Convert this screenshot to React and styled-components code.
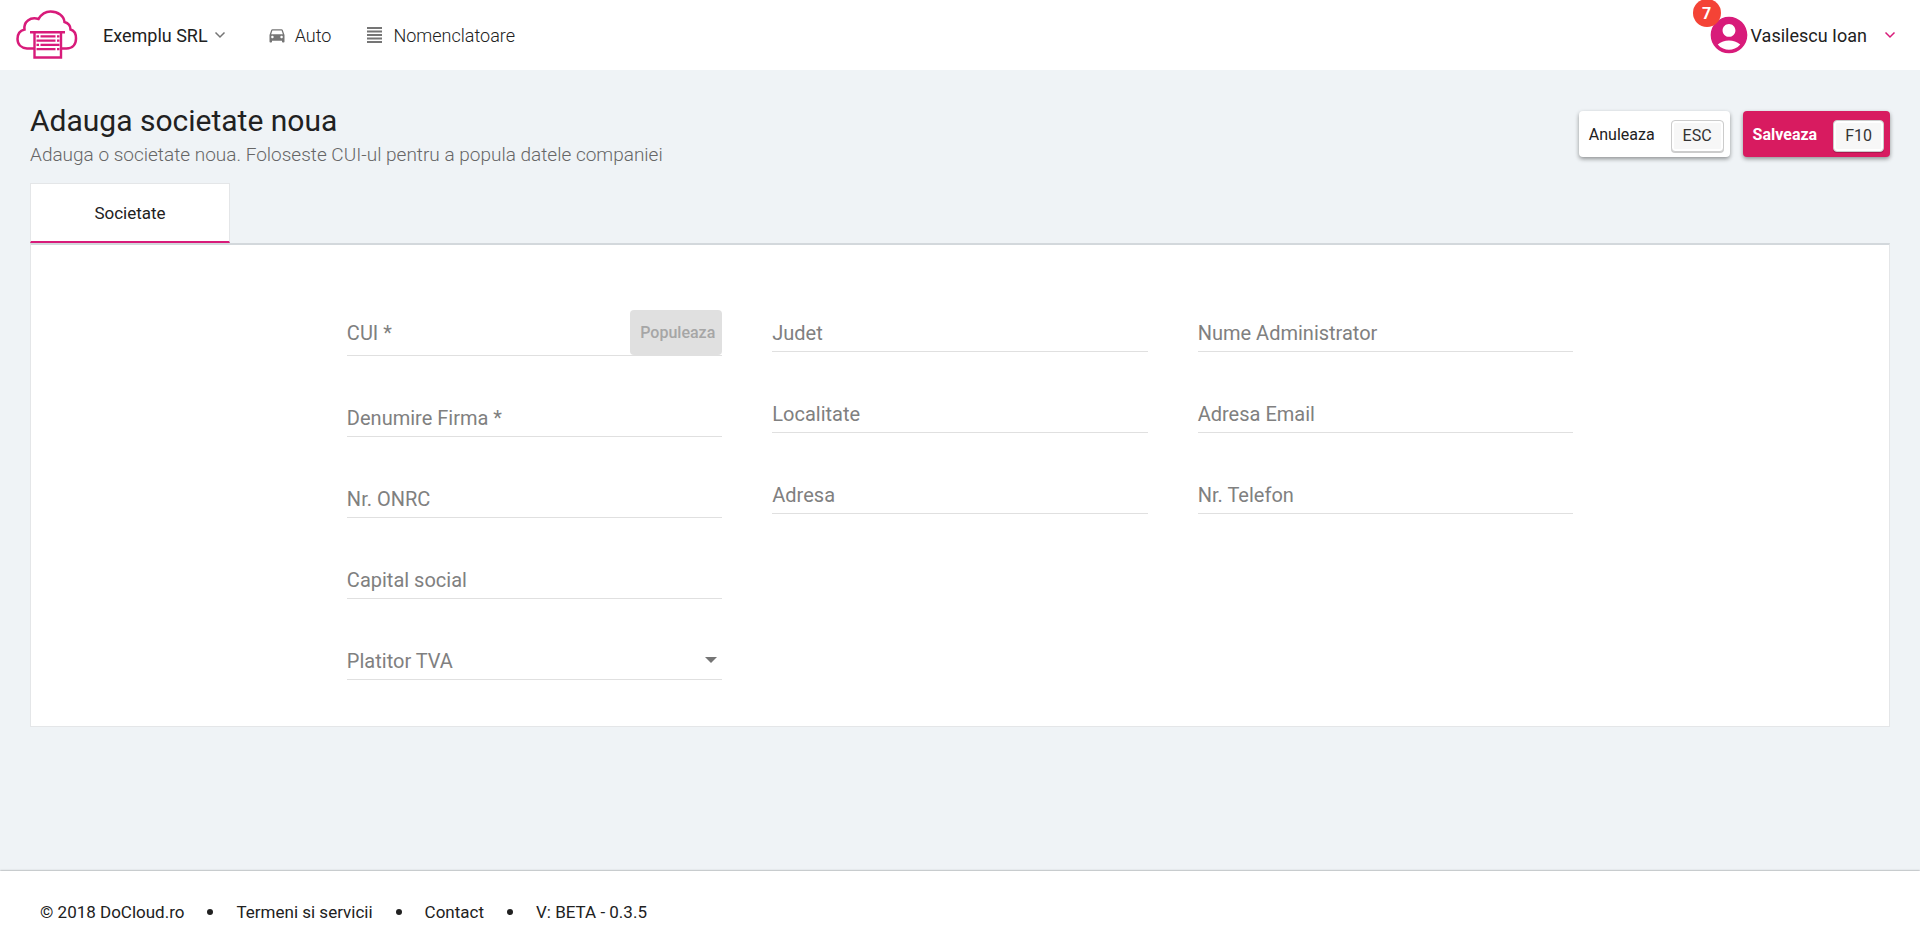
import { useState } from 'react';
import styled, { createGlobalStyle } from 'styled-components';
import { MdAccountCircle, MdDirectionsCar } from 'react-icons/md';

const columns = [
  [
    { id: 'cui', label: 'CUI *', action: 'Populeaza' },
    { id: 'denumire', label: 'Denumire Firma *' },
    { id: 'onrc', label: 'Nr. ONRC' },
    { id: 'capital', label: 'Capital social' },
    { id: 'tva', label: 'Platitor TVA', options: ['Da', 'Nu'] },
  ],
  [
    { id: 'judet', label: 'Judet' },
    { id: 'localitate', label: 'Localitate' },
    { id: 'adresa', label: 'Adresa' },
  ],
  [
    { id: 'administrator', label: 'Nume Administrator' },
    { id: 'email', label: 'Adresa Email' },
    { id: 'telefon', label: 'Nr. Telefon' },
  ],
];

const Logo = () => (
  <svg width="62" height="50" viewBox="0 0 62 50" fill="none" stroke="#d81b7a">
    <path
      d="M18 38.500H11C5.500 38 1.500 34.500 1.500 29C1.500 24 4.500 20.500 8.500 19.500C7.500 12 14 6.500 22.500 9C25.500 4 30 1.500 34.500 1.500C42 1.500 48 6 48.500 12C52 13 54.500 16 54.500 19.500C58.500 20.500 60 24.500 60 28.500C60 34.500 56.500 38.500 50.500 38.500H46"
      strokeWidth="2.500"
    />
    <path d="M14 22.200H49" strokeWidth="2.600" />
    <path d="M18.500 22V47.500H45V22" strokeWidth="2.400" />
    <path
      d="M20.500 26.300H23M24.500 26.300H39.500M41 26.300H43.500M20.500 30.600H39.500M41 30.600H43.500M20.500 34.900H23M24.500 34.900H43.500M20.500 39.200H39.500M41 39.200H43.500"
      strokeWidth="2.200"
    />
  </svg>
);

const Chevron = ({ color }) => (
  <svg width="12" height="8" viewBox="0 0 12 8" fill="none" stroke={color} strokeWidth="1.500">
    <path d="M1.500 1.500L6 6L10.500 1.500" />
  </svg>
);

const LinesIcon = () => (
  <svg width="20" height="20" viewBox="0 0 20 20" stroke="#757575" strokeWidth="2">
    <path d="M2 3H17M2 6.500H17M2 10H17M2 13.500H17M2 17H17" />
  </svg>
);

const Field = ({ id, label, action, options }) => {
  const [value, setValue] = useState('');
  const handleChange = (e) => setValue(e.target.value);

  return (
    <FieldWrapper $tall={!!action}>
      <Label htmlFor={id} $filled={value !== ''}>
        {label}
      </Label>
      {options ? (
        <>
          <Select id={id} value={value} onChange={handleChange}>
            <option value="" />
            {options.map((option) => (
              <option key={option}>{option}</option>
            ))}
          </Select>
          <Caret width="12" height="6" viewBox="0 0 12 6">
            <path d="M0 0H12L6 6Z" />
          </Caret>
        </>
      ) : (
        <Input id={id} value={value} onChange={handleChange} />
      )}
      {action && (
        <PopulateButton type="button" disabled={value === ''}>
          {action}
        </PopulateButton>
      )}
    </FieldWrapper>
  );
};

const App = () => {
  return (
    <>
      <GlobalStyle />
      <Page>
        <Header>
          <LogoLink href="#" aria-label="DoCloud">
            <Logo />
          </LogoLink>
          <CompanyButton type="button">
            Exemplu SRL
            <Chevron color="#757575" />
          </CompanyButton>
          <Nav>
            <NavLink href="#auto">
              <MdDirectionsCar size={20} />
              Auto
            </NavLink>
            <NavLink href="#nomenclatoare">
              <LinesIcon />
              Nomenclatoare
            </NavLink>
          </Nav>
          <UserButton type="button">
            <Avatar>
              <MdAccountCircle size={44} />
              <Badge>7</Badge>
            </Avatar>
            <UserName>Vasilescu Ioan</UserName>
            <Chevron color="#d81b7a" />
          </UserButton>
        </Header>

        <Main>
          <TitleBar>
            <div>
              <Title>Adauga societate noua</Title>
              <Subtitle>
                Adauga o societate noua. Foloseste CUI-ul pentru a popula datele companiei
              </Subtitle>
            </div>
            <Actions>
              <ActionButton type="button">
                Anuleaza <Key>ESC</Key>
              </ActionButton>
              <ActionButton type="submit" form="societate" $primary>
                Salveaza <Key>F10</Key>
              </ActionButton>
            </Actions>
          </TitleBar>

          <Tab type="button">Societate</Tab>
          <Panel>
            <Form id="societate" onSubmit={(e) => e.preventDefault()}>
              {columns.map((fields) => (
                <Column key={fields[0].id}>
                  {fields.map((field) => (
                    <Field key={field.id} {...field} />
                  ))}
                </Column>
              ))}
            </Form>
          </Panel>
        </Main>

        <Footer>
          <span>© 2018 DoCloud.ro</span>
          <Dot />
          <FooterLink href="#termeni">Termeni si servicii</FooterLink>
          <Dot />
          <FooterLink href="#contact">Contact</FooterLink>
          <Dot />
          <span>V: BETA - 0.3.5</span>
        </Footer>
      </Page>
    </>
  );
};

const GlobalStyle = createGlobalStyle`
  * {
    box-sizing: border-box;
  }

  body {
    margin: 0;
    background: #eff3f6;
    color: #212121;
    font-family: Roboto, sans-serif;
    font-size: 18px;
  }

  button,
  input,
  select {
    font-family: inherit;
    color: inherit;
  }
`;

const Page = styled.div`
  min-height: 100vh;

  display: flex;
  flex-direction: column;
`;

const Header = styled.header`
  height: 70px;
  padding: 0 24px 0 16px;

  display: flex;
  align-items: center;
  background: #fff;
`;

const LogoLink = styled.a`
  display: flex;
`;

const CompanyButton = styled.button`
  margin-left: 25px;
  padding: 0;
  border: none;
  background: none;

  display: flex;
  align-items: center;
  gap: 6px;
  font-size: 18px;
  cursor: pointer;
`;

const Nav = styled.nav`
  margin-left: 41px;

  display: flex;
  gap: 34px;
`;

const NavLink = styled.a`
  display: flex;
  align-items: center;
  gap: 8px;
  color: #212121;
  font-weight: 300;
  text-decoration: none;

  svg {
    color: #757575;
  }
`;

const UserButton = styled.button`
  margin-left: auto;
  padding: 0;
  border: none;
  background: none;

  display: flex;
  align-items: center;
  font-size: 18px;
  cursor: pointer;
`;

const Avatar = styled.span`
  position: relative;

  display: flex;
  color: #d81b7a;
`;

const Badge = styled.span`
  position: absolute;
  top: -14px;
  left: -14px;
  width: 28px;
  height: 28px;

  display: flex;
  align-items: center;
  justify-content: center;
  background: #f44336;
  border-radius: 50%;
  color: #fff;
  font-size: 16px;
  font-weight: 700;
`;

const UserName = styled.span`
  margin-right: 17px;
`;

const Main = styled.main`
  flex: 1;
  padding: 32px 30px;
`;

const TitleBar = styled.div`
  height: 81px;

  display: flex;
  justify-content: space-between;
`;

const Title = styled.h1`
  margin: 0;
  font-size: 30px;
  font-weight: 400;
  line-height: 38px;
`;

const Subtitle = styled.p`
  margin: 0;
  color: #666;
  font-size: 19px;
  font-weight: 300;
  line-height: 30px;
`;

const Actions = styled.div`
  padding-top: 9px;

  display: flex;
  align-items: flex-start;
  gap: 13px;
`;

const ActionButton = styled.button`
  height: 46px;
  padding: 0 6px 0 10px;
  border: none;
  border-radius: 4px;
  background: ${({ $primary }) => ($primary ? '#d81b60' : '#fff')};
  box-shadow: 0 2px 4px rgba(0, 0, 0, 0.4);
  color: ${({ $primary }) => ($primary ? '#fff' : '#212121')};

  display: flex;
  align-items: center;
  gap: 16px;
  font-size: 16px;
  font-weight: ${({ $primary }) => ($primary ? 700 : 400)};
  cursor: pointer;
`;

const Key = styled.kbd`
  height: 32px;
  margin-top: 4px;
  padding: 0 11px;
  border: 1px solid #ccc;
  border-radius: 4px;
  background: #f7f7f7;
  box-shadow: 0 1px 0 rgba(0, 0, 0, 0.2), inset 0 0 0 2px #fff;
  color: #333;

  font-family: inherit;
  font-size: 16px;
  font-weight: 400;
  line-height: 30px;
`;

const Tab = styled.button`
  display: block;
  width: 200px;
  height: 60px;
  border: 1px solid #e4e6e8;
  border-bottom: 2px solid #d81b7a;
  background: #fff;
  font-size: 17px;
`;

const Panel = styled.section`
  padding: 60px 0 46px;
  border: 1px solid #e4e6e8;
  border-top: 2px solid #d3d8dc;
  background: #fff;
`;

const Form = styled.form`
  width: 66%;
  margin: 0 auto;

  display: grid;
  grid-template-columns: repeat(3, 1fr);
  gap: 50px;
`;

const Column = styled.div`
  display: flex;
  flex-direction: column;
  gap: 34px;
`;

const FieldWrapper = styled.div`
  position: relative;
  height: ${({ $tall }) => ($tall ? 51 : 47)}px;
  border-bottom: 1px solid #e0e0e0;

  display: flex;
  align-items: flex-end;
  color: #757575;
`;

const Label = styled.label`
  position: absolute;
  top: ${({ $filled }) => ($filled ? -6 : 16)}px;
  left: 0;
  color: #808080;
  font-size: ${({ $filled }) => ($filled ? 14 : 20)}px;
  line-height: 24px;
  pointer-events: none;
`;

const Input = styled.input`
  flex: 1;
  min-width: 0;
  height: 32px;
  padding: 0;
  border: none;
  outline: none;
  background: none;
  font-size: 18px;
`;

const Select = styled.select`
  flex: 1;
  height: 32px;
  border: none;
  outline: none;
  appearance: none;
  background: none;
  font-size: 18px;
`;

const Caret = styled.svg`
  margin: 0 5px 16px 0;
  fill: #757575;
  pointer-events: none;
`;

const PopulateButton = styled.button`
  height: 45px;
  padding: 0 7px 0 10px;
  border: none;
  border-radius: 4px;
  background: #e0e0e0;
  color: #a6a6a6;
  font-size: 16px;
  font-weight: 500;
`;

const Footer = styled.footer`
  height: 81px;
  padding: 0 40px;

  display: flex;
  align-items: center;
  gap: 23px;
  background: #fff;
  box-shadow: 0 0 2px rgba(0, 0, 0, 0.5);
  font-size: 17px;
`;

const Dot = styled.span`
  width: 6px;
  height: 6px;
  background: #212121;
  border-radius: 50%;
`;

const FooterLink = styled.a`
  color: #212121;
  text-decoration: none;
`;

export default App;
